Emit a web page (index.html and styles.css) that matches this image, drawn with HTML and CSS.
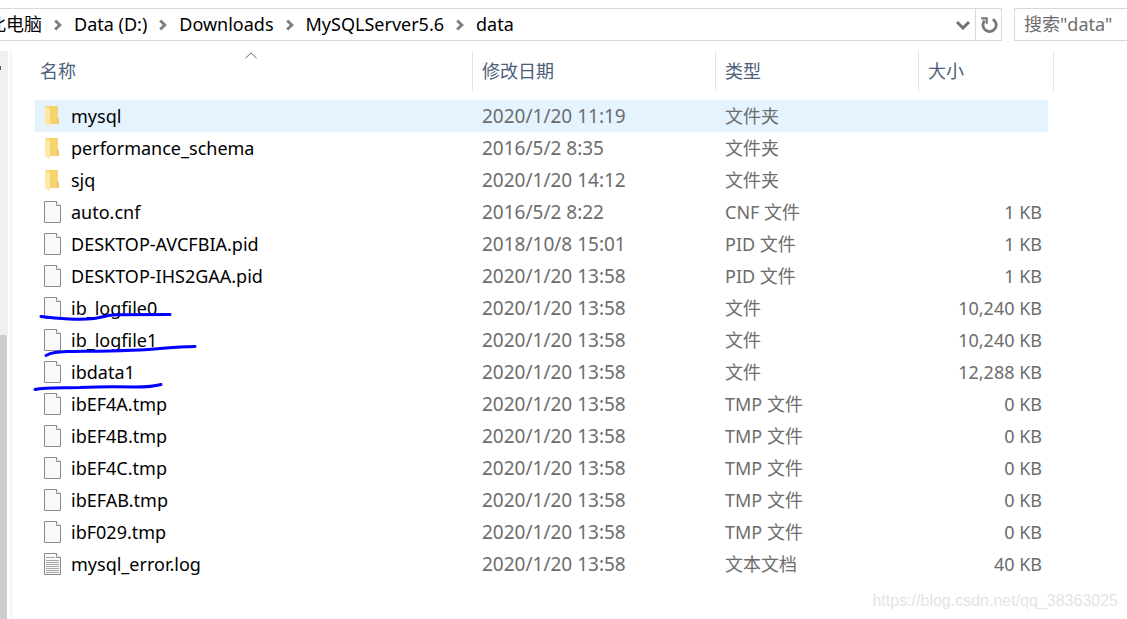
FILE: index.html
```html
<!DOCTYPE html>
<html lang="zh-CN">
<head>
<meta charset="utf-8">
<title>data</title>
<link rel="stylesheet" href="styles.css">
</head>
<body>
<svg class="defs" aria-hidden="true">
  <symbol id="chevron" viewBox="0 0 8 12"><path d="M1.200 1.500 5.800 6 1.200 10.500" fill="none" stroke="#808080" stroke-width="3"/></symbol>
  <symbol id="folder" viewBox="0 0 18 22">
    <path d="M1 1h13v12h1v6H6z" fill="#f5d36f"/>
    <path d="M12 13h3v6h-3z" fill="#efca65"/>
    <path d="M1 1l5 3v18l-5-3z" fill="#ffe8a2"/>
  </symbol>
  <symbol id="file" viewBox="0 0 18 22">
    <path d="M.5.5h12l4 4v17H.5z" fill="#f8f9fa" stroke="#8a8a8a"/>
    <path d="M12.5.5v4h4" fill="#fff" stroke="#8a8a8a"/>
  </symbol>
  <symbol id="log" viewBox="0 0 18 22">
    <path d="M.5.5h12l4 4v17H.5z" fill="#f8f9fa" stroke="#8a8a8a"/>
    <path d="M12.5.5v4h4" fill="#fff" stroke="#8a8a8a"/>
    <path d="M2 4.500h9M2 7.500h13M2 9.500h13M2 11.500h13M2 13.500h13M2 15.500h13M2 17.500h13M2 19.500h13" stroke="#a6a6a6"/>
  </symbol>
</svg>
<header class="toolbar">
  <nav class="address" aria-label="路径">
    <ol class="crumbs">
      <li><a href="#">此电脑</a><svg class="chevron"><use href="#chevron"/></svg></li>
      <li><a href="#">Data (D:)</a><svg class="chevron"><use href="#chevron"/></svg></li>
      <li><a href="#">Downloads</a><svg class="chevron"><use href="#chevron"/></svg></li>
      <li><a href="#">MySQLServer5.6</a><svg class="chevron"><use href="#chevron"/></svg></li>
      <li><a href="#">data</a></li>
    </ol>
    <button class="tool history" aria-label="以前的位置"><svg width="14" height="10" viewBox="0 0 14 10"><path d="M1 2 7 8 13 2" fill="none" stroke="#707070" stroke-width="3"/></svg></button>
    <button class="tool refresh" aria-label="刷新"><svg width="18" height="18" viewBox="0 0 18 18"><path d="M12.800 3.200A6.600 6.600 0 1 1 4.600 4.600" fill="none" stroke="#787878" stroke-width="2.800"/><path d="M1.200 1.200h6.600v6.600H5.600V3.400H1.200z" fill="#787878"/></svg></button>
  </nav>
  <input class="search" type="text" placeholder='搜索"data"' aria-label="搜索">
</header>
<main class="window">
  <aside class="sidebar"><div class="track"><i class="mark"></i></div><div class="thumb"></div></aside>
  <section class="files">
    <table class="list">
      <colgroup><col class="c-name"><col class="c-date"><col class="c-type"><col class="c-size"><col class="c-end"></colgroup>
      <thead><tr>
        <th><button class="head">名称<svg class="sort" width="12" height="7" viewBox="0 0 12 7"><path d="M.5 6.200 6 .8l5.500 5.400" fill="none" stroke="#606060"/></svg></button></th>
        <th><button class="head">修改日期</button></th>
        <th><button class="head">类型</button></th>
        <th colspan="2"><button class="head">大小</button></th>
      </tr></thead>
      <tbody>
        <tr class="hover"><td><span class="name"><svg class="icon"><use href="#folder"/></svg>mysql</span></td><td>2020/1/20 11:19</td><td>文件夹</td><td></td></tr>
        <tr><td><span class="name"><svg class="icon"><use href="#folder"/></svg>performance_schema</span></td><td>2016/5/2 8:35</td><td>文件夹</td><td></td></tr>
        <tr><td><span class="name"><svg class="icon"><use href="#folder"/></svg>sjq</span></td><td>2020/1/20 14:12</td><td>文件夹</td><td></td></tr>
        <tr><td><span class="name"><svg class="icon"><use href="#file"/></svg>auto.cnf</span></td><td>2016/5/2 8:22</td><td>CNF 文件</td><td>1 KB</td></tr>
        <tr><td><span class="name"><svg class="icon"><use href="#file"/></svg>DESKTOP-AVCFBIA.pid</span></td><td>2018/10/8 15:01</td><td>PID 文件</td><td>1 KB</td></tr>
        <tr><td><span class="name"><svg class="icon"><use href="#file"/></svg>DESKTOP-IHS2GAA.pid</span></td><td>2020/1/20 13:58</td><td>PID 文件</td><td>1 KB</td></tr>
        <tr><td><span class="name"><svg class="icon"><use href="#file"/></svg>ib_logfile0</span></td><td>2020/1/20 13:58</td><td>文件</td><td>10,240 KB</td></tr>
        <tr><td><span class="name"><svg class="icon"><use href="#file"/></svg>ib_logfile1</span></td><td>2020/1/20 13:58</td><td>文件</td><td>10,240 KB</td></tr>
        <tr><td><span class="name"><svg class="icon"><use href="#file"/></svg>ibdata1</span></td><td>2020/1/20 13:58</td><td>文件</td><td>12,288 KB</td></tr>
        <tr><td><span class="name"><svg class="icon"><use href="#file"/></svg>ibEF4A.tmp</span></td><td>2020/1/20 13:58</td><td>TMP 文件</td><td>0 KB</td></tr>
        <tr><td><span class="name"><svg class="icon"><use href="#file"/></svg>ibEF4B.tmp</span></td><td>2020/1/20 13:58</td><td>TMP 文件</td><td>0 KB</td></tr>
        <tr><td><span class="name"><svg class="icon"><use href="#file"/></svg>ibEF4C.tmp</span></td><td>2020/1/20 13:58</td><td>TMP 文件</td><td>0 KB</td></tr>
        <tr><td><span class="name"><svg class="icon"><use href="#file"/></svg>ibEFAB.tmp</span></td><td>2020/1/20 13:58</td><td>TMP 文件</td><td>0 KB</td></tr>
        <tr><td><span class="name"><svg class="icon"><use href="#file"/></svg>ibF029.tmp</span></td><td>2020/1/20 13:58</td><td>TMP 文件</td><td>0 KB</td></tr>
        <tr><td><span class="name"><svg class="icon"><use href="#log"/></svg>mysql_error.log</span></td><td>2020/1/20 13:58</td><td>文本文档</td><td>40 KB</td></tr>
      </tbody>
    </table>
    <svg class="ink" width="170" height="86" viewBox="30 306 170 86" aria-hidden="true">
      <path d="M41 316.500C58 319 82 320 94 318.500C104 317 106 315 117 314.800L170 314.500"/>
      <path d="M46 355.500C52 352 58 352 70 351.500C110 351 138 351 160 348.500C175 347 182 347 195 346.500"/>
      <path d="M35 389.500C45 387 60 388 80 387.500C100 386.500 112 386.500 135 387C148 387 154 386.500 161 384.500"/>
    </svg>
    <p class="watermark">https://blog.csdn.net/qq_38363025</p>
  </section>
</main>
</body>
</html>
```
FILE: styles.css
```css
* { box-sizing: border-box; }
body {
  margin: 0;
  min-height: 100vh;
  display: flex;
  flex-direction: column;
  overflow: hidden;
  background: #fff;
  color: #000;
  font: 18px/24px "Noto Sans", "Noto Sans CJK SC", sans-serif;
}
button, input { font: inherit; }
.defs { position: absolute; width: 0; height: 0; }

.toolbar { display: flex; gap: 12px; padding-top: 8px; }
.address {
  flex: 1;
  min-width: 0;
  display: flex;
  height: 33px;
  border: 1px solid #d9d9d9;
  border-left: 0;
  overflow: hidden;
}
.crumbs {
  flex: 1;
  display: flex;
  align-items: center;
  gap: 12px;
  margin: 0 0 0 -12px;
  padding: 0 0 2px;
  list-style: none;
  white-space: nowrap;
}
.crumbs li { display: flex; align-items: center; gap: 12px; }
.crumbs a { color: #000; text-decoration: none; }
.chevron { width: 8px; height: 12px; margin-top: 2px; }
.tool {
  display: flex;
  align-items: center;
  justify-content: center;
  width: 26px;
  padding: 0;
  border: 0;
  background: none;
}
.history { width: 24px; }
.refresh { border-left: 1px solid #d9d9d9; }
.search {
  width: 113px;
  height: 33px;
  padding: 0 0 2px 9px;
  border: 1px solid #d9d9d9;
  border-right: 0;
  border-radius: 0;
  outline: 0;
}
.search::placeholder { color: #6d6d6d; opacity: 1; }

.window { flex: 1; display: flex; padding-top: 10px; }
.sidebar {
  width: 12px;
  display: flex;
  flex-direction: column;
  border-right: 2px solid #f5f5f5;
}
.track { width: 8px; height: 284px; padding-top: 15px; background: #f0f0f0; }
.mark { display: block; width: 1px; height: 4px; background: #555; }
.thumb { flex: 1; width: 7px; background: #cdcdcd; }

.files { position: relative; flex: 1; padding-left: 23px; }
.list { table-layout: fixed; width: 1019px; border-collapse: collapse; }
.c-name { width: 438px; }
.c-date { width: 243px; }
.c-type { width: 203px; }
.c-size { width: 129px; }
.c-end { width: 6px; }
.list th { padding: 0 0 9px; font-weight: 400; }
.head {
  position: relative;
  display: block;
  width: 100%;
  height: 40px;
  padding: 0 9px;
  border: 0;
  border-right: 1px solid #e2e2e2;
  background: none;
  color: #4c607a;
  text-align: left;
}
th:first-child .head { padding-left: 5px; }
.sort { position: absolute; top: 1px; left: 48%; }
.list td { height: 32px; padding: 0 9px; color: #6d6d6d; white-space: nowrap; }
.list td:first-child { color: #000; }
.list td:nth-child(2) { font-size: 19px; }
.list td:nth-child(4) { padding-right: 6px; text-align: right; }
.hover td { background: #e5f3ff; }
.name { display: flex; align-items: center; gap: 9px; }
.icon { width: 18px; height: 22px; }

.ink { position: absolute; left: 18px; top: 255px; }
.ink path { fill: none; stroke: #0000fe; stroke-width: 3; stroke-linecap: round; }
.watermark {
  position: absolute;
  right: 9px;
  bottom: 8px;
  margin: 0;
  color: #e4e4e4;
  font: 16px/20px "Liberation Sans", Arial, sans-serif;
}
```
